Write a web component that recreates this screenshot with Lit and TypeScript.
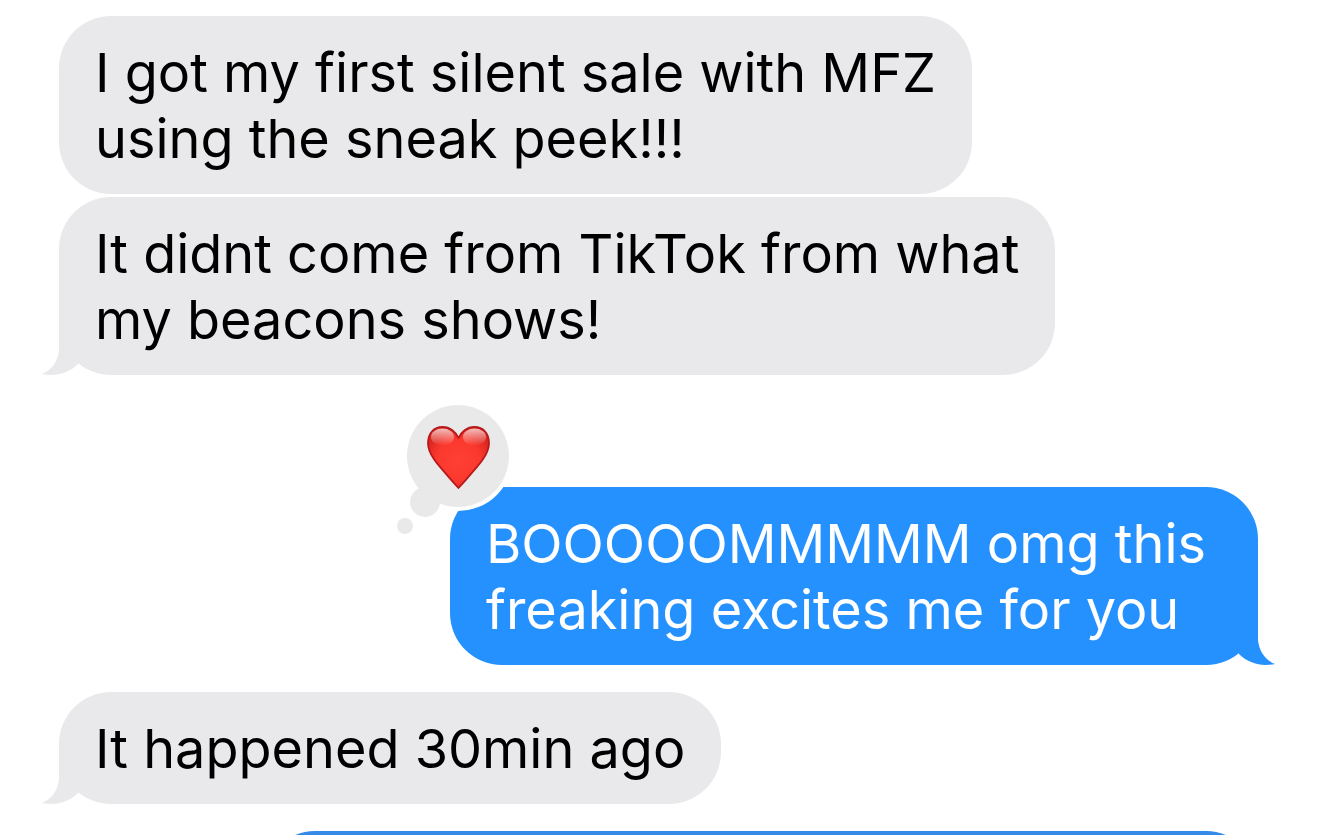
import { LitElement, html, css } from "lit";
import { customElement, property } from "lit/decorators.js";

@customElement("chat-bubble")
class ChatBubble extends LitElement {
  @property({ type: Boolean, reflect: true }) sent = false;
  @property({ type: Boolean, reflect: true }) tail = false;
  @property({ type: Boolean, reflect: true }) loved = false;

  static styles = css`
    :host { display: block; position: relative; width: fit-content; align-self: flex-start;
      background: #e9e9eb; color: #000; border-radius: 52px; }
    :host([sent]) { align-self: flex-end; background: #2491fe; color: #fff; }
    .text { margin: 0; padding: 24px 36px 22px; font-size: 54px; line-height: 66px; }
    :host([sent]) .text { padding-right: 52px; }
    .tail { position: absolute; bottom: 0; left: -17px; width: 60px; height: 56px; fill: #e9e9eb; }
    :host([sent]) .tail { left: auto; right: -17px; transform: scaleX(-1); fill: #2491fe; }
    .reaction { position: absolute; left: -57px; top: -86px; width: 120px; height: 140px; }
  `;

  render() {
    return html`
      ${this.tail ? html`<svg class="tail" viewBox="0 0 60 56" aria-hidden="true">
        <path d="M17 0V31C16 42 10 51 0 55C14 58 27 54 36 45V0Z"/></svg>` : ""}
      <p class="text"><slot></slot></p>
      ${this.loved ? html`<svg class="reaction" viewBox="0 0 120 140" role="img" aria-label="Loved">
        <defs>
          <radialGradient id="body" cx="50%" cy="55%" r="58%">
            <stop offset="0" stop-color="#ff4034"/><stop offset=".6" stop-color="#fb382e"/><stop offset="1" stop-color="#d9241e"/>
          </radialGradient>
          <linearGradient id="gloss" x1="0" y1="0" x2="0" y2="1">
            <stop offset="0" stop-color="#fff" stop-opacity=".7"/><stop offset="1" stop-color="#fff" stop-opacity="0"/>
          </linearGradient>
        </defs>
        <circle cx="65" cy="55" r="55" fill="#fff"/>
        <circle cx="65" cy="55" r="51" fill="#e9e9e9"/>
        <circle cx="32" cy="101" r="15" fill="#e9e9e9"/>
        <circle cx="12" cy="125" r="8" fill="#e9e9e9"/>
        <path fill="url(#body)" stroke="#b5191b" stroke-width="1.800" stroke-linejoin="round" d="M65.500 87C47 66 35 55 35 42C35 32 41 26 49.500 26C57 26 63 31 65.500 37C68 31 74 26 81.500 26C90 26 96 32 96 42C96 55 84 66 65.500 87Z"/>
        <ellipse cx="49.500" cy="36" rx="11.500" ry="8.500" fill="url(#gloss)"/>
        <ellipse cx="81.500" cy="36" rx="11.500" ry="8.500" fill="url(#gloss)"/>
      </svg>` : ""}`;
  }
}

@customElement("app-root")
class AppRoot extends LitElement {
  static styles = css`
    :host { display: block; height: 100vh; overflow: hidden; background: #fff; font-family: Inter, "Liberation Sans", sans-serif; }
    .thread { display: flex; flex-direction: column; padding: 16px 61px 0 59px; }
    .follow { margin-top: 3px; }
    .turn { margin-top: 27px; }
    .reacted { margin-top: 112px; }
    .next { width: 83%; min-height: 112px; background: #338ae8; }
  `;

  render() {
    return html`<main class="thread">
      <chat-bubble>I got my first silent sale with MFZ<br>using the sneak peek!!!</chat-bubble>
      <chat-bubble class="follow" tail>It didnt come from TikTok from what<br>my beacons shows!</chat-bubble>
      <chat-bubble class="reacted" sent tail loved>BOOOOOMMMMM omg this<br>freaking excites me for you</chat-bubble>
      <chat-bubble class="turn" tail>It happened 30min ago</chat-bubble>
      <chat-bubble class="turn next" sent></chat-bubble>
    </main>`;
  }
}
